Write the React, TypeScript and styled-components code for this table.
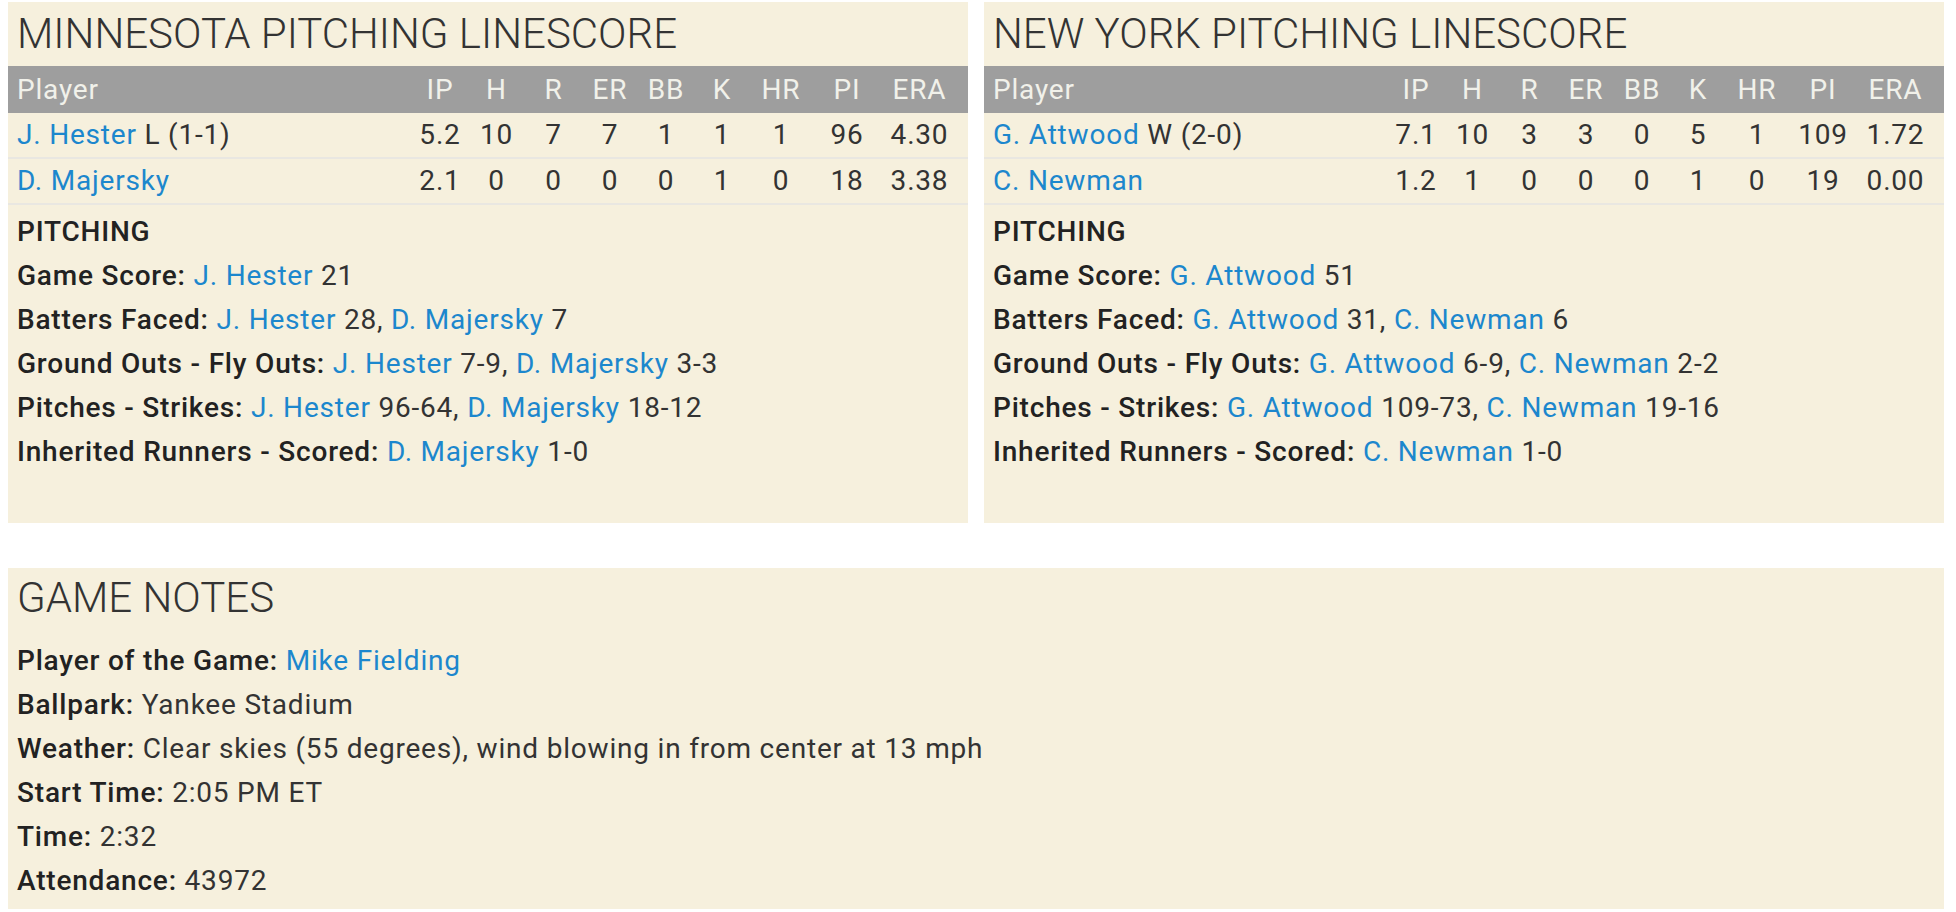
import { ReactNode } from 'react'
import styled, { createGlobalStyle } from 'styled-components'

type Note = { label: string; parts: ReactNode }

type Pitcher = {
  name: string
  decision?: string
  stats: string[]
}

type Team = {
  title: string
  pitchers: Pitcher[]
  notes: Note[]
}

const COLUMNS = ['IP', 'H', 'R', 'ER', 'BB', 'K', 'HR', 'PI', 'ERA']

const Link = styled.a`
  color: #1c87cd;
  text-decoration: none;
  cursor: pointer;
`

const minnesota: Team = {
  title: 'MINNESOTA PITCHING LINESCORE',
  pitchers: [
    { name: 'J. Hester', decision: 'L (1-1)', stats: ['5.2', '10', '7', '7', '1', '1', '1', '96', '4.30'] },
    { name: 'D. Majersky', stats: ['2.1', '0', '0', '0', '0', '1', '0', '18', '3.38'] },
  ],
  notes: [
    { label: 'Game Score', parts: <><Link>J. Hester</Link> 21</> },
    { label: 'Batters Faced', parts: <><Link>J. Hester</Link> 28, <Link>D. Majersky</Link> 7</> },
    { label: 'Ground Outs - Fly Outs', parts: <><Link>J. Hester</Link> 7-9, <Link>D. Majersky</Link> 3-3</> },
    { label: 'Pitches - Strikes', parts: <><Link>J. Hester</Link> 96-64, <Link>D. Majersky</Link> 18-12</> },
    { label: 'Inherited Runners - Scored', parts: <><Link>D. Majersky</Link> 1-0</> },
  ],
}

const newYork: Team = {
  title: 'NEW YORK PITCHING LINESCORE',
  pitchers: [
    { name: 'G. Attwood', decision: 'W (2-0)', stats: ['7.1', '10', '3', '3', '0', '5', '1', '109', '1.72'] },
    { name: 'C. Newman', stats: ['1.2', '1', '0', '0', '0', '1', '0', '19', '0.00'] },
  ],
  notes: [
    { label: 'Game Score', parts: <><Link>G. Attwood</Link> 51</> },
    { label: 'Batters Faced', parts: <><Link>G. Attwood</Link> 31, <Link>C. Newman</Link> 6</> },
    { label: 'Ground Outs - Fly Outs', parts: <><Link>G. Attwood</Link> 6-9, <Link>C. Newman</Link> 2-2</> },
    { label: 'Pitches - Strikes', parts: <><Link>G. Attwood</Link> 109-73, <Link>C. Newman</Link> 19-16</> },
    { label: 'Inherited Runners - Scored', parts: <><Link>C. Newman</Link> 1-0</> },
  ],
}

const gameNotes: Note[] = [
  { label: 'Player of the Game', parts: <Link>Mike Fielding</Link> },
  { label: 'Ballpark', parts: 'Yankee Stadium' },
  { label: 'Weather', parts: 'Clear skies (55 degrees), wind blowing in from center at 13 mph' },
  { label: 'Start Time', parts: '2:05 PM ET' },
  { label: 'Time', parts: '2:32' },
  { label: 'Attendance', parts: '43972' },
]

function NoteLines({ notes }: { notes: Note[] }) {
  return (
    <>
      {notes.map((n) => (
        <Line key={n.label}>
          <Label>{n.label}:</Label> {n.parts}
        </Line>
      ))}
    </>
  )
}

function LinescorePanel({ team }: { team: Team }) {
  return (
    <Panel $bottom={49}>
      <Title>{team.title}</Title>
      <HeaderRow>
        <Cell $player>Player</Cell>
        {COLUMNS.map((c) => (
          <Cell key={c}>{c}</Cell>
        ))}
      </HeaderRow>
      {team.pitchers.map((p) => (
        <BodyRow key={p.name}>
          <Cell $player>
            <Link>{p.name}</Link>
            {p.decision ? ` ${p.decision}` : ''}
          </Cell>
          {p.stats.map((s, i) => (
            <Cell key={i}>{s}</Cell>
          ))}
        </BodyRow>
      ))}
      <Notes $top={5}>
        <SectionHead>PITCHING</SectionHead>
        <NoteLines notes={team.notes} />
      </Notes>
    </Panel>
  )
}

export default function App() {
  return (
    <>
      <GlobalStyle />
      <Page>
        <TopRow>
          <LinescorePanel team={minnesota} />
          <LinescorePanel team={newYork} />
        </TopRow>
        <Panel $bottom={6}>
          <Title $tight>GAME NOTES</Title>
          <Notes $top={18}>
            <NoteLines notes={gameNotes} />
          </Notes>
        </Panel>
      </Page>
    </>
  )
}

const GlobalStyle = createGlobalStyle`
  body {
    margin: 0;
    background: #fff;
    font-family: Roboto, 'Liberation Sans', sans-serif;
    color: #333;
  }
`

const Page = styled.div`
  width: 1936px;
  padding: 2px 0 0 8px;
  display: flex;
  flex-direction: column;
  gap: 45px;
`

const TopRow = styled.div`
  display: grid;
  grid-template-columns: 1fr 1fr;
  gap: 16px;
`

const Panel = styled.section<{ $bottom: number }>`
  background: #f6f0dd;
  padding-bottom: ${(props) => props.$bottom}px;
`

const Title = styled.h2<{ $tight?: boolean }>`
  margin: 0;
  padding: ${(props) => (props.$tight ? '6px 9px 0' : '8px 9px 9px')};
  font-size: 42px;
  line-height: 47px;
  font-weight: 300;
  color: #333;
  white-space: nowrap;
`

const HeaderRow = styled.div`
  display: grid;
  grid-template-columns: 1fr 56px 57px 57px 56px 56px 56px 62px 70px 75px;
  padding-right: 11px;
  height: 47px;
  align-items: center;
  background: #9e9e9e;
  color: #f1f1ea;
  font-size: 28px;
  letter-spacing: 0.8px;
`

const BodyRow = styled(HeaderRow)`
  background: transparent;
  color: #333;
  height: 42px;
  padding-bottom: 2px;
  border-bottom: 2px solid #e9e7e1;
`

const Cell = styled.div<{ $player?: boolean }>`
  text-align: ${(props) => (props.$player ? 'left' : 'center')};
  padding-left: ${(props) => (props.$player ? '9px' : '0')};
  white-space: nowrap;
`

const Notes = styled.div<{ $top: number }>`
  padding: ${(props) => props.$top}px 9px 0;
  font-size: 28px;
  letter-spacing: 0.8px;
  line-height: 44px;
`

const SectionHead = styled.div`
  font-weight: 500;
  color: #222;
`

const Line = styled.div`
  white-space: nowrap;
`

const Label = styled.span`
  font-weight: 500;
  color: #222;
`
